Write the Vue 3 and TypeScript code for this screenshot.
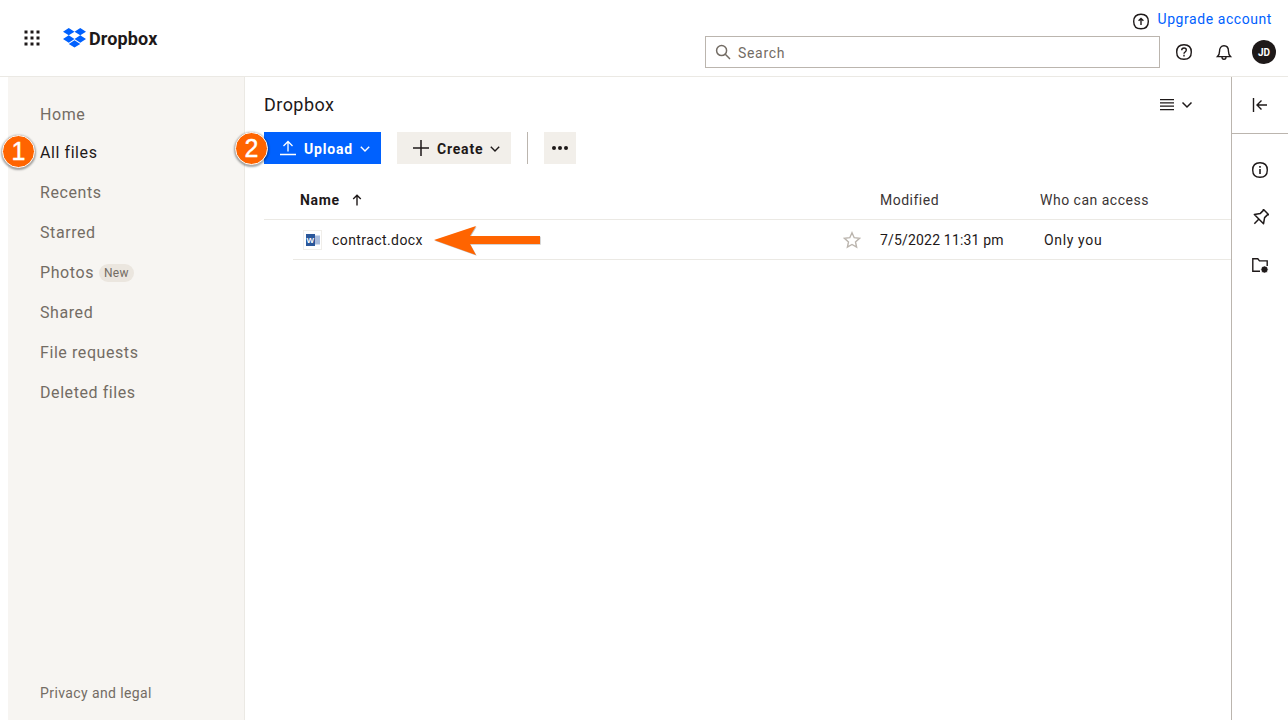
<script setup lang="ts">
const navItems: { label: string; active?: boolean; badge?: string }[] = [
  { label: 'Home' },
  { label: 'All files', active: true },
  { label: 'Recents' },
  { label: 'Starred' },
  { label: 'Photos', badge: 'New' },
  { label: 'Shared' },
  { label: 'File requests' },
  { label: 'Deleted files' },
]
const gridDots: [number, number][] = []
for (const y of [0, 6, 12]) for (const x of [0, 6, 12]) gridDots.push([x, y])
</script>

<template>
  <div class="page">
    <header class="topbar">
      <div class="brand">
        <svg class="grid-icon" width="16" height="16" viewBox="0 0 16 16">
          <rect v-for="(d, i) in gridDots" :key="i" :x="d[0] + 0.5" :y="d[1] + 0.5" width="3" height="3" fill="#1e1919" />
        </svg>
        <div class="logo">
          <svg width="23" height="20" viewBox="0 0 23 20">
            <path fill="#0061fe" d="M5.75 0 0 3.7l5.75 3.65L11.5 3.7zM17.25 0 11.5 3.7l5.75 3.65L23 3.7zM0 11l5.75 3.7 5.75-3.7-5.75-3.65zM17.25 7.35 11.5 11l5.75 3.7L23 11zM5.75 15.9l5.75 3.7 5.75-3.7-5.75-3.7z" />
          </svg>
          <span class="logo-text">Dropbox</span>
        </div>
      </div>
      <div class="top-right">
        <div class="upgrade">
          <svg width="18" height="18" viewBox="0 0 18 18" fill="none" stroke="#1e1919" stroke-width="1.4">
            <path d="M9 2.200c5 0 7.300 2.300 7.300 7.300s-2.300 7.300-7.300 7.300-7.300-2.300-7.300-7.300S4 2.200 9 2.200z" />
            <path d="M9 13V6.500M6.600 8.800 9 6.400l2.400 2.400" />
          </svg>
          <span>Upgrade account</span>
        </div>
        <div class="search-row">
          <div class="search">
            <svg width="16" height="16" viewBox="0 0 16 16" fill="none" stroke="#736c64" stroke-width="1.5">
              <circle cx="6.600" cy="6.600" r="5" />
              <path d="m10.300 10.300 4.700 4.700" />
            </svg>
            <span>Search</span>
          </div>
          <svg class="tool help" width="18" height="18" viewBox="0 0 18 18" fill="none" stroke="#1e1919" stroke-width="1.4">
            <path d="M9 1.700c5.200 0 7.300 2.100 7.300 7.300s-2.100 7.300-7.300 7.300S1.700 14.200 1.700 9 3.800 1.700 9 1.700z" />
            <path d="M6.700 7.200C6.700 5.900 7.700 5 9 5s2.300.9 2.300 2.100c0 1.900-2.300 1.800-2.300 3.600" />
            <path d="M9 11.800v1.600" />
          </svg>
          <svg class="tool bell" width="18" height="18" viewBox="0 0 18 18" fill="none" stroke="#1e1919" stroke-width="1.4">
            <path d="M2.500 13.600h13c-1.500-1.500-2-2.600-2-5.200 0-3.200-1.600-5.600-4.500-5.600S4.500 5.200 4.500 8.400c0 2.600-.5 3.700-2 5.200z" />
            <path d="M7 14c0 1.500.8 2.300 2 2.300s2-.8 2-2.300" />
          </svg>
          <div class="avatar">JD</div>
        </div>
      </div>
    </header>

    <div class="body">
      <aside class="sidebar">
        <nav class="nav">
          <div v-for="item in navItems" :key="item.label" class="nav-item" :class="{ active: item.active }">
            <span>{{ item.label }}</span>
            <span v-if="item.badge" class="badge">{{ item.badge }}</span>
          </div>
        </nav>
        <div class="legal">Privacy and legal</div>
      </aside>

      <main class="main">
        <div class="title-row">
          <h1>Dropbox</h1>
          <div class="view-toggle">
            <svg width="14" height="12" viewBox="0 0 14 12" fill="none" stroke="#1e1919" stroke-width="1.300">
              <path d="M0 .7h14M0 3.900h14M0 7.100h14M0 10.700h14" />
            </svg>
            <svg width="12" height="8" viewBox="0 0 12 8" fill="none" stroke="#1e1919" stroke-width="1.500">
              <path d="m1.500 1.500 4.500 4.500 4.500-4.500" />
            </svg>
          </div>
        </div>

        <div class="actions">
          <button class="btn primary">
            <svg width="16" height="16" viewBox="0 0 16 16" fill="none" stroke="#fff" stroke-width="1.300">
              <path d="M0 14.500h16M8 11.500V1.500M3.500 6 8 1.500 12.500 6" />
            </svg>
            <span>Upload</span>
            <svg class="chev" width="10" height="6" viewBox="0 0 10 6" fill="none" stroke="#fff" stroke-width="1.400">
              <path d="m.8.800 4.200 4.200L9.200.8" />
            </svg>
          </button>
          <button class="btn secondary">
            <svg width="16" height="16" viewBox="0 0 16 16" fill="none" stroke="#1e1919" stroke-width="1.500">
              <path d="M8 0v16M0 8h16" />
            </svg>
            <span>Create</span>
            <svg class="chev" width="10" height="6" viewBox="0 0 10 6" fill="none" stroke="#1e1919" stroke-width="1.400">
              <path d="m.8.800 4.200 4.200L9.200.8" />
            </svg>
          </button>
          <div class="divider"></div>
          <button class="btn more" aria-label="More">
            <svg width="16" height="4" viewBox="0 0 16 4" fill="#1e1919">
              <circle cx="2" cy="2" r="2" /><circle cx="8" cy="2" r="2" /><circle cx="14" cy="2" r="2" />
            </svg>
          </button>
        </div>

        <div class="table-head">
          <div class="col-name">
            <strong>Name</strong>
            <svg width="10" height="12" viewBox="0 0 10 12" fill="none" stroke="#1e1919" stroke-width="1.400">
              <path d="M5 11.500V1.500M1.200 5 5 1.300 8.800 5" />
            </svg>
          </div>
          <div class="col-mod">Modified</div>
          <div class="col-who">Who can access</div>
        </div>

        <div class="file-row">
          <div class="file-name">
            <div class="file-icon">
              <svg width="14" height="12" viewBox="0 0 14 12">
                <rect x="6" y="1.500" width="8" height="9" fill="#a9bcdc" />
                <rect x="0" y="0" width="9" height="12" fill="#2b579a" />
                <text x="4.500" y="9" font-size="8" font-weight="700" fill="#fff" text-anchor="middle" font-family="Liberation Sans, sans-serif">W</text>
              </svg>
            </div>
            <span>contract.docx</span>
          </div>
          <svg class="star" width="18" height="18" viewBox="0 0 18 18" fill="none" stroke="#bbb5ae" stroke-width="1.400">
            <path d="m9 1.800 2.200 4.900 5.300.6-4 3.600 1.100 5.300L9 13.500l-4.600 2.700 1.100-5.300-4-3.600 5.300-.6z" />
          </svg>
          <div class="cell-date">7/5/2022 11:31 pm</div>
          <div class="cell-who">Only you</div>
        </div>
      </main>

      <aside class="rail">
        <div class="rail-top">
          <svg width="16" height="14" viewBox="0 0 16 14" fill="none" stroke="#1e1919" stroke-width="1.400">
            <path d="M1.500 0v14M15 7H5.200M9.500 2.500 5 7l4.500 4.500" />
          </svg>
        </div>
        <div class="rail-icons">
          <svg width="18" height="18" viewBox="0 0 18 18" fill="none" stroke="#1e1919" stroke-width="1.400">
            <path d="M9 1.700c5.200 0 7.300 2.100 7.300 7.300s-2.100 7.300-7.300 7.300S1.700 14.200 1.700 9 3.800 1.700 9 1.700z" />
            <path d="M9 8v5" stroke-width="1.600" />
            <path d="M9 5v1.700" stroke-width="1.600" />
          </svg>
          <svg class="pin" width="18" height="18" viewBox="0 0 18 18" fill="none" stroke="#1e1919" stroke-width="1.500">
            <g transform="rotate(45 9 9)" stroke-linejoin="round">
              <path d="M4.500 0.500h9M6 0.500V5.500L2.500 10.500h13L12 5.500V0.500" />
              <path d="M9 10.500v6.500" />
            </g>
          </svg>
          <svg class="folder" width="18" height="18" viewBox="0 0 18 18" fill="none" stroke="#1e1919" stroke-width="1.400">
            <path d="M9 15.300H1.800V2.700h5l1.700 2.200h7.700v5" />
            <circle cx="13.500" cy="13.500" r="3.600" fill="#1e1919" stroke="#fff" stroke-width=".8" />
          </svg>
        </div>
      </aside>
    </div>

    <div class="marker marker-one">1</div>
    <div class="marker marker-two">2</div>
    <svg class="arrow" width="108" height="32" viewBox="0 0 108 32">
      <path d="M0 15 42 1 36 11H106V19H36L42 30z" fill="#6b6b6b" opacity=".4" transform="translate(.7 .7)" />
      <path d="M0 15 42 1 36 11H106V19H36L42 30z" fill="#ff6400" />
    </svg>
  </div>
</template>

<style>
html, body { margin: 0; background: #fff; }
</style>

<style scoped>
.page {
  position: relative;
  width: 1288px;
  height: 720px;
  overflow: hidden;
  display: flex;
  flex-direction: column;
  font-family: Roboto, "Liberation Sans", sans-serif;
  color: #1e1919;
  background: #fff;
}
.topbar {
  height: 76px;
  flex: none;
  display: flex;
  justify-content: space-between;
  border-bottom: 1px solid #ebe9e4;
}
.brand { display: flex; align-items: center; padding-left: 24px; }
.grid-icon { display: block; }
.logo { display: flex; align-items: center; margin-left: 23px; gap: 3px; }
.logo svg { display: block; }
.logo-text { font-size: 18px; font-weight: 700; letter-spacing: 0.13px; color: #1e1919; }
.top-right { width: 583px; display: flex; flex-direction: column; align-items: flex-end; padding-right: 12px; box-sizing: border-box; }
.upgrade {
  height: 36px;
  display: flex;
  align-items: flex-start;
  gap: 7px;
  padding: 10px 4px 0 0;
  box-sizing: border-box;
  font-size: 14px;
  line-height: 18px;
  letter-spacing: 0.57px;
  color: #0061fe;
}
.upgrade svg { margin-top: 2px; }
.search-row { display: flex; align-items: center; width: 571px; }
.search {
  width: 455px;
  height: 32px;
  box-sizing: border-box;
  border: 1px solid #bbb5ae;
  display: flex;
  align-items: center;
  gap: 7px;
  padding: 2px 0 0 9px;
  font-size: 14px;
  letter-spacing: 0.68px;
  color: #736c64;
}
.search svg { margin-top: -2px; }
.tool { display: block; flex: none; }
.help { margin-left: 15px; }
.bell { margin-left: 22px; }
.avatar {
  margin-left: 19px;
  width: 24px;
  height: 24px;
  border-radius: 50%;
  background: #1e1919;
  color: #fff;
  font-size: 10px;
  font-weight: 700;
  display: flex;
  align-items: center;
  justify-content: center;
}
.body { flex: 1; display: flex; min-height: 0; }
.sidebar {
  width: 237px;
  margin-left: 8px;
  flex: none;
  box-sizing: border-box;
  background: #f7f5f2;
  border-right: 1px solid #ebe9e4;
  display: flex;
  flex-direction: column;
  justify-content: space-between;
  padding: 17px 0 18px 32px;
}
.nav-item {
  height: 40px;
  display: flex;
  align-items: center;
  gap: 5px;
  font-size: 16px;
  letter-spacing: 0.58px;
  color: #736c64;
}
.nav-item:first-child { margin-bottom: -2px; }
.nav-item.active { color: #1e1919; }
.badge {
  font-size: 12px;
  font-weight: 400;
  line-height: 18px;
  letter-spacing: 0.3px;
  padding: 0 5px;
  border-radius: 9px;
  background: #ebe6df;
  color: #736c64;
  margin-top: 1px;
}
.legal { font-size: 14px; letter-spacing: 0.4px; color: #736c64; line-height: 18px; }
.main { flex: 1; min-width: 0; padding: 0 0 0 19px; }
.title-row {
  height: 55px;
  display: flex;
  align-items: center;
  justify-content: space-between;
  padding-right: 38px;
}
h1 { margin: 0; font-size: 18px; font-weight: 400; letter-spacing: 0.45px; color: #1e1919; }
.view-toggle { display: flex; align-items: center; gap: 7px; }
.view-toggle svg { display: block; }
.actions { display: flex; align-items: center; height: 32px; }
.btn {
  height: 32px;
  border: 0;
  padding: 0;
  margin: 0;
  display: flex;
  align-items: center;
  font-family: inherit;
  font-size: 14px;
  font-weight: 700;
  letter-spacing: 0.8px;
}
.btn span { position: relative; top: 1px; }
.btn svg { display: block; flex: none; }
.primary { width: 117px; background: #0061fe; color: #fff; padding-left: 16px; gap: 8px; }
.secondary { width: 114px; margin-left: 16px; background: #f2efea; color: #1e1919; padding-left: 16px; gap: 8px; }
.chev { margin-left: -1px; margin-top: 1px; }
.divider { width: 1px; height: 32px; background: #bbb5ae; margin: 0 16px; }
.more { width: 32px; background: #f2efea; justify-content: center; }
.table-head {
  margin-top: 16px;
  height: 40px;
  box-sizing: border-box;
  display: flex;
  align-items: center;
  border-bottom: 1px solid #ebe9e4;
  font-size: 14px;
  letter-spacing: 0.5px;
  color: #3b3535;
}
.col-name { width: 580px; margin-left: 36px; display: flex; align-items: center; gap: 12px; color: #1e1919; flex: none; }
.col-name strong { letter-spacing: 0.7px; }
.col-name svg { display: block; }
.col-mod { width: 160px; flex: none; }
.file-row {
  height: 40px;
  margin-left: 29px;
  box-sizing: border-box;
  display: flex;
  align-items: center;
  border-bottom: 1px solid #ebe9e4;
  font-size: 14px;
}
.file-name { width: 550px; box-sizing: border-box; padding-left: 10px; display: flex; align-items: center; gap: 10px; letter-spacing: 0.42px; flex: none; }
.file-icon {
  width: 19px;
  height: 20px;
  box-sizing: border-box;
  border: 1px solid #f0eeea;
  display: flex;
  align-items: center;
  justify-content: center;
}
.file-icon svg { display: block; }
.star { flex: none; margin-right: 19px; }
.cell-date { width: 164px; flex: none; letter-spacing: 0.18px; }
.cell-who { letter-spacing: 0.65px; }
.rail { flex: none; border-left: 1px solid #bbb5ae; box-sizing: border-box; width: 57px; }
.rail-top {
  height: 57px;
  box-sizing: border-box;
  border-bottom: 1px solid #bbb5ae;
  display: flex;
  align-items: center;
  justify-content: center;
}
.rail-top svg { display: block; }
.rail-icons { display: flex; flex-direction: column; align-items: center; gap: 30px; padding-top: 27px; }
.rail-icons svg { display: block; }
.rail-icons .pin { margin-right: 1px; }
.rail-icons .folder { margin-top: -1px; }
.marker {
  position: absolute;
  width: 31px;
  height: 31px;
  border-radius: 50%;
  background: #ff6400;
  border: 1px solid #fff;
  box-shadow: 0 1px 2px 1px rgba(0, 0, 0, 0.35);
  color: #fff;
  font-family: "Liberation Sans", sans-serif;
  font-size: 25px;
  line-height: 31px;
  text-align: center;
  -webkit-text-stroke: 0.4px #fff;
}
.marker-one { left: 2px; top: 135px; }
.marker-two { left: 235px; top: 132px; }
.arrow { position: absolute; left: 434px; top: 225px; }
</style>
